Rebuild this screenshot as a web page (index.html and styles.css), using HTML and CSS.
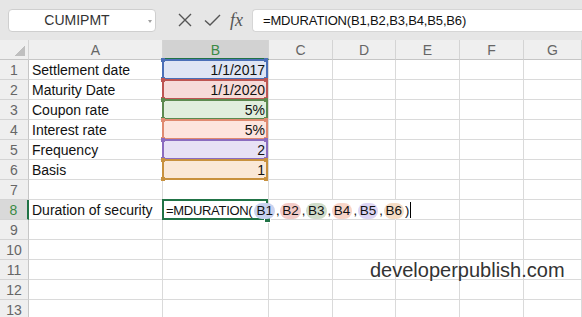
FILE: index.html
```html
<!DOCTYPE html>
<html lang="en">
<head>
  <meta charset="utf-8">
  <title>MDURATION</title>
  <link rel="stylesheet" href="styles.css">
</head>
<body>
  <div class="ribbon">
    <div class="namebox">CUMIPMT<span class="drop"></span></div>
    <svg class="icon cancel" width="16" height="16" viewBox="0 0 16 16">
      <path d="M2 2 L14 14 M14 2 L2 14" stroke="#555" stroke-width="1.4" fill="none"/>
    </svg>
    <svg class="icon enter" width="17" height="16" viewBox="0 0 17 16">
      <path d="M1 8.5 L6 13 L16 3" stroke="#555" stroke-width="1.4" fill="none"/>
    </svg>
    <span class="fx">fx</span>
    <div class="formulabar">=MDURATION(B1,B2,B3,B4,B5,B6)</div>
  </div>

  <div class="sheet">
    <div class="hd corner"></div>
    <div class="hd">A</div>
    <div class="hd sel">B</div>
    <div class="hd">C</div>
    <div class="hd">D</div>
    <div class="hd">E</div>
    <div class="hd">F</div>
    <div class="hd">G</div>

    <div class="rh">1</div>
    <div class="c">Settlement date</div>
    <div class="c num rng r1"><span class="box"></span>1/1/2017</div>
    <div class="c"></div><div class="c"></div><div class="c"></div><div class="c"></div><div class="c"></div>

    <div class="rh">2</div>
    <div class="c">Maturity Date</div>
    <div class="c num rng r2"><span class="box"></span>1/1/2020</div>
    <div class="c"></div><div class="c"></div><div class="c"></div><div class="c"></div><div class="c"></div>

    <div class="rh">3</div>
    <div class="c">Coupon rate</div>
    <div class="c num rng r3"><span class="box"></span>5%</div>
    <div class="c"></div><div class="c"></div><div class="c"></div><div class="c"></div><div class="c"></div>

    <div class="rh">4</div>
    <div class="c">Interest rate</div>
    <div class="c num rng r4"><span class="box"></span>5%</div>
    <div class="c"></div><div class="c"></div><div class="c"></div><div class="c"></div><div class="c"></div>

    <div class="rh">5</div>
    <div class="c">Frequency</div>
    <div class="c num rng r5"><span class="box"></span>2</div>
    <div class="c"></div><div class="c"></div><div class="c"></div><div class="c"></div><div class="c"></div>

    <div class="rh">6</div>
    <div class="c">Basis</div>
    <div class="c num rng r6"><span class="box"></span>1</div>
    <div class="c"></div><div class="c"></div><div class="c"></div><div class="c"></div><div class="c"></div>

    <div class="rh">7</div>
    <div class="c"></div><div class="c"></div><div class="c"></div><div class="c"></div><div class="c"></div><div class="c"></div><div class="c"></div>

    <div class="rh sel">8</div>
    <div class="c">Duration of security</div>
    <div class="c rng active"><span class="box"></span><span class="edit">=MDURATION(<span class="ref p1">B1</span>,<span class="ref p2">B2</span>,<span class="ref p3">B3</span>,<span class="ref p4">B4</span>,<span class="ref p5">B5</span>,<span class="ref p6">B6</span>)<span class="caret"></span></span></div>
    <div class="c nob"></div><div class="c nob"></div><div class="c"></div><div class="c"></div><div class="c"></div>

    <div class="rh">9</div>
    <div class="c"></div><div class="c"></div><div class="c"></div><div class="c"></div><div class="c"></div><div class="c"></div><div class="c"></div>
    <div class="rh">10</div>
    <div class="c"></div><div class="c"></div><div class="c"></div><div class="c"></div><div class="c"></div><div class="c"></div><div class="c"></div>
    <div class="rh">11</div>
    <div class="c"></div><div class="c"></div><div class="c"></div><div class="c"></div><div class="c"></div><div class="c"></div><div class="c"></div>
    <div class="rh">12</div>
    <div class="c"></div><div class="c"></div><div class="c"></div><div class="c"></div><div class="c"></div><div class="c"></div><div class="c"></div>
    <div class="rh">13</div>
    <div class="c"></div><div class="c"></div><div class="c"></div><div class="c"></div><div class="c"></div><div class="c"></div><div class="c"></div>
  </div>

  <div class="watermark">developerpublish.com</div>
</body>
</html>
```

FILE: styles.css
```css
body {
  margin: 0;
  width: 582px;
  height: 317px;
  overflow: hidden;
  position: relative;
  font-family: "Liberation Sans", Arial, sans-serif;
  background: #fff;
}

/* formula bar strip */
.ribbon {
  display: flex;
  align-items: center;
  height: 40px;
  padding-left: 8px;
  background: #e6e6e6;
  box-sizing: border-box;
}
.namebox {
  width: 148px;
  height: 23px;
  box-sizing: border-box;
  background: #fff;
  border: 1px solid #cfcfcf;
  border-radius: 4px;
  font-size: 14px;
  line-height: 21px;
  color: #333;
  display: flex;
  align-items: center;
  justify-content: center;
  padding-right: 10px;
  position: relative;
}
.drop {
  position: absolute;
  right: 3px;
  top: 10px;
  border-left: 2.5px solid transparent;
  border-right: 2.5px solid transparent;
  border-top: 3px solid #a0a0a0;
}
.icon { flex: none; }
.cancel { margin-left: 21px; }
.enter { margin-left: 11px; }
.fx {
  margin-left: 9px;
  font-family: "Liberation Serif", "Times New Roman", serif;
  font-style: italic;
  font-size: 18px;
  color: #555;
}
.formulabar {
  flex: 1;
  margin-left: 9px;
  height: 23px;
  background: #fff;
  border: 1px solid #d6d6d6;
  border-right: none;
  border-radius: 4px 0 0 4px;
  box-sizing: border-box;
  font-size: 13px;
  letter-spacing: -0.15px;
  line-height: 21px;
  padding-left: 10px;
  color: #111;
}

/* grid */
.sheet {
  display: grid;
  grid-template-columns: 29px 134px 106px 64px 63px 64px 64px 1fr;
  grid-auto-rows: 20px;
}
.hd, .rh, .c {
  box-sizing: border-box;
  font-size: 14px;
  line-height: 20px;
  white-space: nowrap;
}
.hd {
  background: #efefef;
  color: #666;
  text-align: center;
  border-right: 1px solid #d4d4d4;
  border-bottom: 1px solid #c6c6c6;
}
.hd.sel {
  background: #d2d2d2;
  color: #3b8a45;
  border-bottom: 2px solid #217346;
}
.corner {
  background: #efefef linear-gradient(135deg, transparent 50%, #bfbfbf 50%) no-repeat right 3px bottom 3px / 10px 10px;
}
.rh {
  background: #efefef;
  color: #666;
  text-align: center;
  border-right: 1px solid #c6c6c6;
  border-bottom: 1px solid #d4d4d4;
}
.rh.sel {
  background: #d9d9d9;
  color: #3b8a45;
  border-right: 2px solid #217346;
}
.c {
  border-right: 1px solid #dadada;
  border-bottom: 1px solid #dadada;
  padding: 0 3px;
  color: #111;
}
.c.nob { border-right-color: transparent; }
.num { text-align: right; }

/* range highlight boxes */
.rng { position: relative; z-index: 0; }
.box {
  position: absolute;
  top: -1px;
  bottom: -1px;
  left: -1px;
  right: 0;
  border: 2px solid;
  z-index: -1;
}
.box::before, .box::after {
  content: "";
  position: absolute;
  left: -3px;
  width: 4px;
  height: 4px;
  background: currentColor;
  box-shadow: 103px 0 0 currentColor;
}
.box::before { top: -3px; }
.box::after { bottom: -3px; }
.r1 .box { color: #4b6fb7; border-color: #4b6fb7; background: #dfe5f4; }
.r2 .box { color: #bd5552; border-color: #bd5552; background: #f6dbd9; }
.r3 .box { color: #5d8a4f; border-color: #5d8a4f; background: #e1eedd; }
.r4 .box { color: #e08a70; border-color: #e08a70; background: #fde5de; }
.r5 .box { color: #8b6cbf; border-color: #8b6cbf; background: #e7e1f5; }
.r6 .box { color: #c8913e; border-color: #c8913e; background: #fae8d7; }

.active { z-index: 1; }
.active .box { border-color: #217346; background: transparent; }
.active .box::before { display: none; }
.active .box::after {
  left: auto;
  right: -4px;
  bottom: -4px;
  width: 5px;
  height: 5px;
  background: #217346;
  box-shadow: 0 0 0 1px #fff;
}
.edit {
  font-size: 13px;
  letter-spacing: -0.3px;
}
.ref {
  display: inline-block;
  font-size: 13.5px;
  letter-spacing: 0;
  line-height: 16px;
  padding: 0 2px;
  margin: 0 1px;
  border-radius: 8px;
}
.p1 { background: #c8d2ef; margin-left: 2px; }
.p2 { background: #f3cbc8; }
.p3 { background: #d0ddca; }
.p4 { background: #f8d5c8; }
.p5 { background: #dcd5f3; }
.p6 { background: #f5dcc5; }
.caret {
  display: inline-block;
  width: 1px;
  height: 16px;
  margin-left: 1px;
  vertical-align: -3px;
  background: #000;
}

.watermark {
  position: absolute;
  left: 370px;
  top: 260px;
  font-size: 20px;
  line-height: 20px;
  color: #333;
}
```
